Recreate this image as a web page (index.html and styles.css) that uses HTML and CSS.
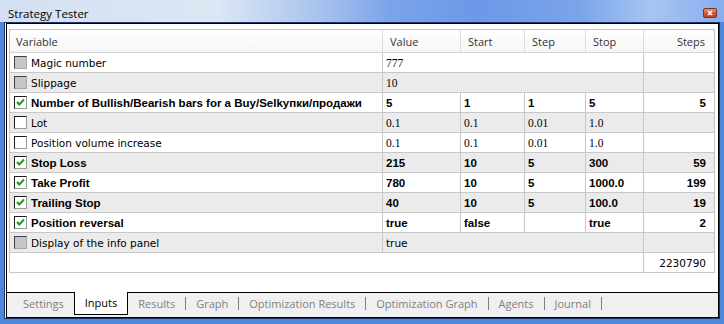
FILE: index.html
```html
<!doctype html>
<html lang="en">
<head>
    <meta charset="UTF-8">
    <title>Strategy Tester</title>
    <link rel="stylesheet" href="styles.css">
</head>
<body>
<div class="window">
    <div class="titlebar">
        <span class="title">Strategy Tester</span>
        <span class="close">
            <svg width="14" height="10" viewBox="0 0 14 10">
                <defs>
                    <linearGradient id="cg" x1="0" y1="0" x2="0" y2="1">
                        <stop offset="0" stop-color="#eb9a80"/>
                        <stop offset="0.5" stop-color="#d4583a"/>
                        <stop offset="1" stop-color="#c2401f"/>
                    </linearGradient>
                </defs>
                <rect x="0.5" y="0.5" width="13" height="9" rx="1.5" fill="url(#cg)" stroke="#7a3420"/>
                <path d="M5 3 L9 7 M9 3 L5 7" stroke="#fff" stroke-width="1.6"/>
            </svg>
        </span>
    </div>
    <div class="client">
        <div class="panel">
            <div class="list-area">
                <div class="list">
                    <div class="row head">
                        <div class="c">Variable</div>
                        <div class="c">Value</div>
                        <div class="c">Start</div>
                        <div class="c">Step</div>
                        <div class="c">Stop</div>
                        <div class="c right">Steps</div>
                    </div>
                    <div class="rows">
                        <div class="row">
                            <div class="c name"><span class="cb gray"></span>Magic number</div>
                            <div class="c span4 serif">777</div>
                            <div class="c"></div>
                        </div>
                        <div class="row">
                            <div class="c name"><span class="cb gray"></span>Slippage</div>
                            <div class="c span4 serif">10</div>
                            <div class="c"></div>
                        </div>
                        <div class="row bold">
                            <div class="c name"><span class="cb on"><svg width="11" height="11" viewBox="0 0 11 11"><path d="M2 5 L4.3 7.5 L9 2.5" fill="none" stroke="#1e9a1e" stroke-width="2"/></svg></span>Number of Bullish/Bearish bars for a Buy/Selkупки/продажи</div>
                            <div class="c">5</div>
                            <div class="c">1</div>
                            <div class="c">1</div>
                            <div class="c">5</div>
                            <div class="c right">5</div>
                        </div>
                        <div class="row">
                            <div class="c name"><span class="cb"></span>Lot</div>
                            <div class="c serif">0.1</div>
                            <div class="c serif">0.1</div>
                            <div class="c serif">0.01</div>
                            <div class="c serif">1.0</div>
                            <div class="c"></div>
                        </div>
                        <div class="row">
                            <div class="c name"><span class="cb"></span>Position volume increase</div>
                            <div class="c serif">0.1</div>
                            <div class="c serif">0.1</div>
                            <div class="c serif">0.01</div>
                            <div class="c serif">1.0</div>
                            <div class="c"></div>
                        </div>
                        <div class="row bold">
                            <div class="c name"><span class="cb on"><svg width="11" height="11" viewBox="0 0 11 11"><path d="M2 5 L4.3 7.5 L9 2.5" fill="none" stroke="#1e9a1e" stroke-width="2"/></svg></span>Stop Loss</div>
                            <div class="c">215</div>
                            <div class="c">10</div>
                            <div class="c">5</div>
                            <div class="c">300</div>
                            <div class="c right">59</div>
                        </div>
                        <div class="row bold">
                            <div class="c name"><span class="cb on"><svg width="11" height="11" viewBox="0 0 11 11"><path d="M2 5 L4.3 7.5 L9 2.5" fill="none" stroke="#1e9a1e" stroke-width="2"/></svg></span>Take Profit</div>
                            <div class="c">780</div>
                            <div class="c">10</div>
                            <div class="c">5</div>
                            <div class="c">1000.0</div>
                            <div class="c right">199</div>
                        </div>
                        <div class="row bold">
                            <div class="c name"><span class="cb on"><svg width="11" height="11" viewBox="0 0 11 11"><path d="M2 5 L4.3 7.5 L9 2.5" fill="none" stroke="#1e9a1e" stroke-width="2"/></svg></span>Trailing Stop</div>
                            <div class="c">40</div>
                            <div class="c">10</div>
                            <div class="c">5</div>
                            <div class="c">100.0</div>
                            <div class="c right">19</div>
                        </div>
                        <div class="row bold">
                            <div class="c name"><span class="cb on"><svg width="11" height="11" viewBox="0 0 11 11"><path d="M2 5 L4.3 7.5 L9 2.5" fill="none" stroke="#1e9a1e" stroke-width="2"/></svg></span>Position reversal</div>
                            <div class="c">true</div>
                            <div class="c">false</div>
                            <div class="c"></div>
                            <div class="c">true</div>
                            <div class="c right">2</div>
                        </div>
                        <div class="row">
                            <div class="c name"><span class="cb gray"></span>Display of the info panel</div>
                            <div class="c span4">true</div>
                            <div class="c"></div>
                        </div>
                        <div class="row">
                            <div class="c span5"></div>
                            <div class="c right">2230790</div>
                        </div>
                    </div>
                </div>
            </div>
            <div class="tabs">
                <span class="tab">Settings</span>
                <span class="tab active">Inputs</span>
                <span class="tab">Results</span><span class="sep"></span>
                <span class="tab">Graph</span><span class="sep"></span>
                <span class="tab">Optimization Results</span><span class="sep"></span>
                <span class="tab">Optimization Graph</span><span class="sep"></span>
                <span class="tab">Agents</span><span class="sep"></span>
                <span class="tab">Journal</span><span class="sep"></span>
            </div>
        </div>
    </div>
</div>
</body>
</html>
```
FILE: styles.css
```css
body {
    margin: 0;
    font-family: "DejaVu Sans", sans-serif;
    background-color: #4e86dc;
}
.window {
    width: 724px;
    height: 324px;
    display: flex;
    flex-direction: column;
    background-color: #4e86dc;
}
.titlebar {
    height: 22px;
    flex: none;
    box-sizing: border-box;
    padding: 4px 7px 0 8px;
    display: flex;
    align-items: center;
    background: linear-gradient(to right, #d3e0f1 0%, #dce7f4 30%, #a9c3ee 44%, #7aa3ea 54%, #6b98e8 66%, #7aa4ea 80%, #a7c5f1 90%, #86adee 100%);
}
.title {
    font-family: "Open Sans", sans-serif;
    font-size: 11.5px;
    color: #000;
}
.close {
    margin-left: auto;
    display: flex;
}
.client {
    flex: 1;
    display: flex;
    margin: 0 4px 5px 4px;
    border: 1px solid #1f3460;
    padding-left: 1px;
    background-color: #fff;
}
.panel {
    flex: 1;
    display: flex;
    flex-direction: column;
    border: 1px solid #000;
}
.list-area {
    flex: 1;
    background-color: #fff;
    padding: 5px 0 0 2px;
}
.list {
    width: 704px;
    border: 1px solid #c4c4c4;
    border-bottom: none;
    font-size: 10.5px;
    color: #000;
}
.row {
    display: grid;
    grid-template-columns: 372px 78px 64px 61px 58px 69px;
    height: 20px;
    box-sizing: border-box;
    border-bottom: 1px solid #c8c8c8;
}
.rows .row:nth-child(even) {
    background-color: #ebebeb;
}
.c {
    display: flex;
    align-items: center;
    padding: 0 3px;
    border-left: 1px solid #c8c8c8;
    white-space: nowrap;
    overflow: hidden;
}
.row .c:first-child {
    border-left: none;
}
.right {
    justify-content: flex-end;
    padding-right: 6px;
}
.span4 {
    grid-column: span 4;
}
.span5 {
    grid-column: span 5;
}
.head {
    height: 23px;
    background: linear-gradient(#ffffff, #f6f6f6);
    border-bottom-color: #d4d4d4;
    font-family: "Open Sans", sans-serif;
    font-size: 11px;
    color: #333;
}
.head .c {
    padding: 1px 7px 0 7px;
    border-left-color: #dcdcdc;
}
.head .c:first-child {
    padding-left: 6px;
}
.name {
    padding-left: 4px;
}
.bold {
    font-family: "Liberation Sans", sans-serif;
    font-weight: bold;
    font-size: 11.5px;
}
.serif {
    font-family: "Liberation Serif", serif;
    font-size: 11.5px;
    padding-top: 1px;
}
.cb {
    width: 13px;
    height: 13px;
    box-sizing: border-box;
    margin-right: 4px;
    flex: none;
    border: 1px solid;
    border-color: #1c1c1c #9a9a9a #9a9a9a #1c1c1c;
    background-color: #fff;
    display: flex;
    align-items: center;
    justify-content: center;
}
.cb.gray {
    border-color: #404040 #a8a8a8 #a8a8a8 #404040;
    background-color: #c6c6c6;
}
.tabs {
    height: 25px;
    flex: none;
    box-sizing: border-box;
    display: flex;
    align-items: flex-start;
    padding-left: 6px;
    border-top: 1px solid #000;
    background-color: #f0f0f0;
    font-family: "Open Sans", sans-serif;
    font-size: 11px;
    color: #808080;
}
.tab {
    padding: 0 10px;
    line-height: 21px;
    white-space: nowrap;
}
.tab.active {
    margin-top: -1px;
    height: 23px;
    box-sizing: border-box;
    line-height: 22px;
    border: 1px solid #000;
    border-top: none;
    background-color: #fff;
    color: #000;
}
.sep {
    width: 1px;
    height: 13px;
    margin-top: 4px;
    background-color: #808080;
}
```
